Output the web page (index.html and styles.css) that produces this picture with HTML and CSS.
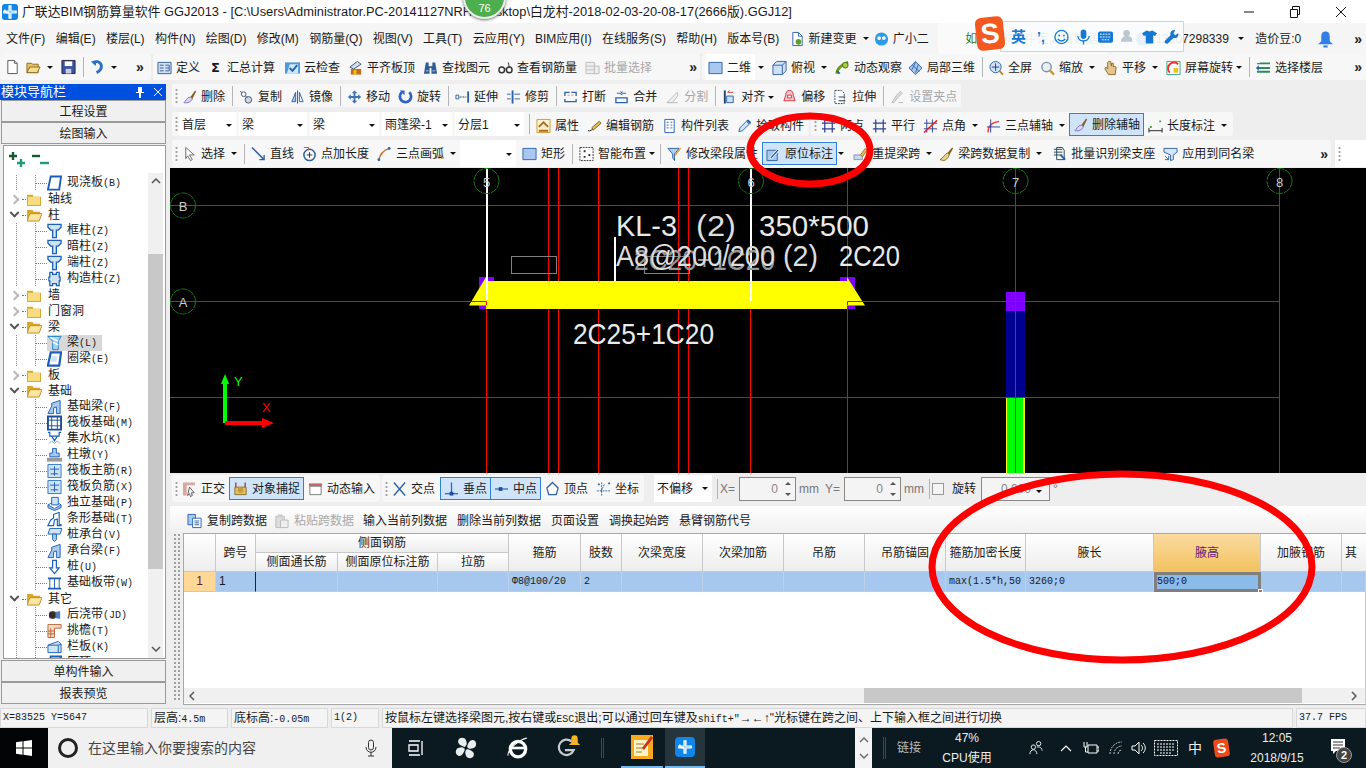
FILE: index.html
```html
<!DOCTYPE html>
<html lang="zh-CN">
<head>
<meta charset="utf-8">
<title>广联达BIM钢筋算量软件 GGJ2013</title>
<link rel="stylesheet" href="styles.css">
</head>
<body>
<svg class="defs" aria-hidden="true">
  <symbol id="doc" viewBox="0 0 16 16"><path d="M3 1h7l3 3v11H3z" fill="#fff" stroke="#555"/><path d="M10 1v3h3" fill="#ddd" stroke="#555"/></symbol>
  <symbol id="open" viewBox="0 0 16 16"><path d="M1 4h5l1 1h6v9H1z" fill="#e8c267" stroke="#8a6a20"/><path d="M1 14l3-6h11l-3 6z" fill="#f6dc92" stroke="#8a6a20"/></symbol>
  <symbol id="save" viewBox="0 0 16 16"><path d="M1 1h14v14H1z" fill="#3a55a8" stroke="#223"/><path d="M4 2h8v5H4z" fill="#fff"/><path d="M5 10h6v5H5z" fill="#ccd"/></symbol>
  <symbol id="undo" viewBox="0 0 16 16"><path d="M4 3c5-2 9 1 8 6-1 3-3 4-5 5" fill="none" stroke="#2c6fc4" stroke-width="3"/><path d="M1 2l6-1-1 6z" fill="#2c6fc4"/></symbol>
  <symbol id="table" viewBox="0 0 16 16"><path d="M1 2h14v12H1z" fill="#cfe0f4" stroke="#335f96"/><path d="M3 5h4M3 8h4M3 11h4M9 5h4v6H9M9 8h4" fill="none" stroke="#335f96"/></symbol>
  <symbol id="cloud" viewBox="0 0 16 16"><path d="M0 2h16v12H0z" fill="#4f9bd8"/><path d="M2 14L5 4h9v10z" fill="#cfe6f8"/><path d="M5 8l3 3 5-6" fill="none" stroke="#1767ad" stroke-width="2"/></symbol>
  <symbol id="plate" viewBox="0 0 16 16"><path d="M2 7l8-6 4 3-8 5z" fill="#cfe0f4" stroke="#456"/><path d="M3 9h11v6H3z" fill="#c66a1c"/><path d="M6 10h3v5H6z" fill="#f1c21d"/></symbol>
  <symbol id="bino" viewBox="0 0 16 16"><path d="M3 2h3v4h4V2h3l2 12H9V8H7v6H1z" fill="#2d5c99"/><path d="M3 11h3M10 11h3" stroke="#bcd" /></symbol>
  <symbol id="glass" viewBox="0 0 16 16"><circle cx="4" cy="10" r="3" fill="none" stroke="#333" stroke-width="1.5"/><circle cx="12" cy="10" r="3" fill="none" stroke="#333" stroke-width="1.5"/><path d="M7 9h2M12 7l-1-5" stroke="#333"/></symbol>
  <symbol id="batch" viewBox="0 0 16 16"><path d="M1 2h9v12H1zM10 6h5v8h-5M1 6h9M1 10h9" fill="#eee" stroke="#bbb"/></symbol>
  <symbol id="sq" viewBox="0 0 16 16"><path d="M1 2h14v12H1z" fill="#a9c8f0" stroke="#2f63a8"/></symbol>
  <symbol id="box3d" viewBox="0 0 16 16"><path d="M1 5l4-4h10v10l-4 4H1z" fill="#cfe0f4" stroke="#2f63a8"/><path d="M1 5h10v10M11 5l4-4" fill="none" stroke="#2f63a8"/></symbol>
  <symbol id="orbit" viewBox="0 0 16 16"><path d="M2 14c0-5 5-10 12-12" fill="none" stroke="#6a9a1c" stroke-width="3"/><circle cx="11" cy="5" r="3" fill="#a6cf3c" stroke="#48700c"/><path d="M2 11l3 3" stroke="#1c5fb8" stroke-width="2"/></symbol>
  <symbol id="local3d" viewBox="0 0 16 16"><path d="M1 8l7-7 7 7-7 7z" fill="#a9c8f0" stroke="#2f63a8"/><path d="M5 5l7 7M8 2l-4 8M11 4l-3 9" fill="none" stroke="#2f63a8"/></symbol>
  <symbol id="zoomall" viewBox="0 0 16 16"><circle cx="7" cy="7" r="6" fill="#cfe0f4" stroke="#2f63a8"/><path d="M7 3v8M3 7h8" stroke="#1c3f78"/><path d="M11 11l4 4" stroke="#b48a2c" stroke-width="2"/></symbol>
  <symbol id="zoom" viewBox="0 0 16 16"><circle cx="7" cy="7" r="5" fill="#e6eef8" stroke="#7f8fa8" stroke-width="1.5"/><path d="M10 10l5 5" stroke="#c79a36" stroke-width="2.5"/></symbol>
  <symbol id="hand" viewBox="0 0 16 16"><path d="M5 2v7L3 7 2 9l4 6h7l1-8-2-1-1 1V3L9 3v3L8 1 6 1z" fill="#e5c58a" stroke="#8a6a30"/></symbol>
  <symbol id="rotsc" viewBox="0 0 16 16"><path d="M1 1h14v14H1z" fill="#fff" stroke="#3a8"/><path d="M4 13a6 6 0 0 1 9-9" fill="none" stroke="#e33" stroke-width="2"/><path d="M8 8h5v5H8z" fill="#f1c21d"/></symbol>
  <symbol id="layers" viewBox="0 0 16 16"><path d="M1 3l5-1h9v2H1zM1 7h14v2H1zM1 11h14v2H1z" fill="#2e8a5a"/><path d="M0 8l3-3v6z" fill="#1c5fb8"/></symbol>
  <symbol id="brush" viewBox="0 0 16 16"><path d="M9 8l5-7 1 1-4 8z" fill="#8a5a1c"/><path d="M2 14c2-1 3-6 7-6l2 2c-1 3-5 5-9 4z" fill="#d8d8f0" stroke="#8a6ac0"/></symbol>
  <symbol id="copy" viewBox="0 0 16 16"><circle cx="5" cy="5" r="2.5" fill="none" stroke="#456"/><circle cx="10" cy="11" r="3.5" fill="#cdd8e4" stroke="#456"/><path d="M1 2l2 1M7 7l2 2" stroke="#1c5fb8"/></symbol>
  <symbol id="mirror" viewBox="0 0 16 16"><path d="M8 1v14" stroke="#456"/><path d="M6 3v10H2z" fill="#a9c8f0" stroke="#2f63a8"/><path d="M10 3v10h4z" fill="none" stroke="#2f63a8"/></symbol>
  <symbol id="move" viewBox="0 0 16 16"><path d="M8 1l3 3H9v3h3V5l3 3-3 3V9H9v3h2l-3 3-3-3h2V9H4v2L1 8l3-3v2h3V4H5z" fill="#3f74b4"/></symbol>
  <symbol id="rot" viewBox="0 0 16 16"><path d="M4 3a6 6 0 1 0 8 0" fill="none" stroke="#2f63c8" stroke-width="3"/><path d="M2 1h5v5z" fill="#2f63c8"/></symbol>
  <symbol id="extend" viewBox="0 0 16 16"><path d="M13 2h2v12h-2z" fill="#2f63a8"/><path d="M1 6h3v4H1z" fill="none" stroke="#2f63a8"/><path d="M5 8h7" stroke="#333" stroke-dasharray="2 1"/></symbol>
  <symbol id="trim" viewBox="0 0 16 16"><path d="M6 1h2v14H6z" fill="#2f63a8"/><path d="M1 5h4M1 10h4M9 5h6M9 10h6" stroke="#2f63a8"/></symbol>
  <symbol id="brk" viewBox="0 0 16 16"><path d="M2 7V3h5M14 7V3H9M2 10v3h12v-3" fill="none" stroke="#2f63a8" stroke-width="1.4"/><path d="M5 6h2M9 6h2" stroke="#e77" /></symbol>
  <symbol id="merge" viewBox="0 0 16 16"><path d="M2 9h12v5H2z" fill="none" stroke="#2f63a8" stroke-width="1.4"/><path d="M3 4h4M9 4h4M7 2l2 2-2 2M9 2L7 4l2 2" fill="none" stroke="#2f63a8"/></symbol>
  <symbol id="split" viewBox="0 0 16 16"><path d="M2 14L13 3l1 3-6 8z" fill="#eee" stroke="#bbb"/><path d="M2 14h12" stroke="#bbb"/></symbol>
  <symbol id="align" viewBox="0 0 16 16"><path d="M3 1v14" stroke="#1c3f78" stroke-width="2"/><path d="M5 7h7v7H5z" fill="#cfe0f4" stroke="#2f63a8"/><path d="M6 3h6M6 3l2-2" stroke="#d33" fill="none"/></symbol>
  <symbol id="offset" viewBox="0 0 16 16"><path d="M8 1c3 0 4 2 4 5l2 6H2l2-6c0-3 1-5 4-5z" fill="#f3c6c6" stroke="#c34"/><path d="M6 9h4V6H6z" fill="#fff" stroke="#c34"/></symbol>
  <symbol id="stretch" viewBox="0 0 16 16"><path d="M2 1h7l3 3v11H2z" fill="#fff" stroke="#345" stroke-dasharray="2 1"/><path d="M6 8h7M6 12h7" stroke="#234"/></symbol>
  <symbol id="setgrip" viewBox="0 0 16 16"><path d="M2 14l5-8 4-4 2 2-4 4-5 6z" fill="#ddd" stroke="#bbb"/><path d="M9 14h5" stroke="#bbb"/></symbol>
  <symbol id="attr" viewBox="0 0 16 16"><path d="M1 1h14v14H1z" fill="#fdf2d0" stroke="#d09a30"/><path d="M3 9l5-5 5 5M3 13h10" fill="none" stroke="#b06a1c" stroke-width="2"/></symbol>
  <symbol id="edit" viewBox="0 0 16 16"><path d="M1 13c3 1 4-2 6-1" fill="none" stroke="#222"/><path d="M5 10l8-7 2 2-8 7z" fill="#e6c25a" stroke="#7a5a10"/></symbol>
  <symbol id="list" viewBox="0 0 16 16"><path d="M3 1h10v14H3z" fill="#fff" stroke="#2f63a8"/><path d="M5 4h2M9 4h2M5 7h2M9 7h2M5 10h2M9 10h2" stroke="#2f63a8"/></symbol>
  <symbol id="pick" viewBox="0 0 16 16"><path d="M2 14l1-4 7-7 3 3-7 7z" fill="#cfe6f8" stroke="#2f63a8"/><path d="M10 2l2-1 3 3-1 2z" fill="#1c5fb8"/></symbol>
  <symbol id="hash" viewBox="0 0 16 16"><path d="M4 1v14M12 1v14M1 5h14M1 11h14" stroke="#2f3f9a" stroke-width="1.3"/></symbol>
  <symbol id="angle" viewBox="0 0 16 16"><path d="M4 1v14M10 1v14M1 5h14M1 11h14" stroke="#2f3f9a"/><path d="M1 15L15 2" stroke="#e22" stroke-width="1.5"/></symbol>
  <symbol id="tpt" viewBox="0 0 16 16"><path d="M2 15C2 8 6 4 14 3" fill="none" stroke="#e44" stroke-width="1.4"/><path d="M5 1v14M1 9h14" stroke="#2f3f9a"/></symbol>
  <symbol id="lenm" viewBox="0 0 16 16"><path d="M1 10v5M15 10v5M1 13h14" stroke="#222"/><path d="M2 8h2v2H2zM12 2h2v2h-2z" fill="#3fa83f"/></symbol>
  <symbol id="arrow" viewBox="0 0 16 16"><path d="M4 1l9 8H8l3 5-2 1-3-5-2 3z" fill="#fff" stroke="#666"/></symbol>
  <symbol id="lineq" viewBox="0 0 16 16"><path d="M1 1l13 13" stroke="#2f5f9f" stroke-width="1.6"/><path d="M14 9v5H9" fill="none" stroke="#2f5f9f" stroke-width="1.4"/></symbol>
  <symbol id="ptlen" viewBox="0 0 16 16"><circle cx="8" cy="9" r="6" fill="none" stroke="#2f5f9f" stroke-width="1.6"/><path d="M8 6v6M5 9h6" stroke="#333"/><path d="M2 1h5v3" fill="none" stroke="#c44"/></symbol>
  <symbol id="arc" viewBox="0 0 16 16"><path d="M2 15C3 8 7 4 13 2" fill="none" stroke="#c8702c" stroke-width="1.6"/><circle cx="2" cy="14" r="1.5" fill="#2f63a8"/><circle cx="13" cy="2" r="1.5" fill="#2f63a8"/></symbol>
  <symbol id="smart" viewBox="0 0 16 16"><path d="M1 1h14v14H1z" fill="#fff" stroke="#333" stroke-dasharray="2 1"/><path d="M5 4h2v2H5zM10 8h2v2h-2zM5 10h2v2H5z" fill="#333"/></symbol>
  <symbol id="funnel" viewBox="0 0 16 16"><path d="M1 2h12L8 8v7L6 12V8z" fill="#a9d0f0" stroke="#2f63a8"/><path d="M8 9l6-8 1 1-6 8z" fill="#e6a030"/></symbol>
  <symbol id="mark" viewBox="0 0 16 16"><path d="M1 4h11v11H1z" fill="#a9c8f0" stroke="#2f63a8"/><path d="M4 12l8-9 2 1-8 9z" fill="#1c5fb8" stroke="#fff"/></symbol>
  <symbol id="repick" viewBox="0 0 16 16"><path d="M1 14V9h9v5z" fill="#c9d8ec" stroke="#7a9ac4"/><path d="M8 9l5-7 2 2-5 7z" fill="#e0c060" stroke="#97801c"/></symbol>
  <symbol id="broom" viewBox="0 0 16 16"><path d="M9 7l5-6 1 1-4 7z" fill="#8a5a1c"/><path d="M1 14c3-1 5-6 8-7l2 2c-1 3-4 6-6 6z" fill="#e8d48a" stroke="#8a7020"/></symbol>
  <symbol id="batchid" viewBox="0 0 16 16"><path d="M2 3h9M2 6h9M2 9h9" stroke="#245"/><path d="M5 1h6l2 3v10H5z" fill="none" stroke="#245"/><path d="M9 9l5 5" stroke="#1c5fb8" stroke-width="2"/></symbol>
  <symbol id="apply" viewBox="0 0 16 16"><path d="M1 2h14v4l-4 3v5l-3 1V9L1 6z" fill="#d5e6f7" stroke="#2f63a8"/><path d="M2 10l4 4M6 10v4H2" fill="none" stroke="#2f63a8"/></symbol>
  <symbol id="bug" viewBox="0 0 16 16"><path d="M3 1h6l4 4v10H3z" fill="#fff" stroke="#2f63a8"/><path d="M9 1v4h4" fill="none" stroke="#2f63a8"/><circle cx="9" cy="11" r="3" fill="#5aa02c"/></symbol>
  <symbol id="ortho" viewBox="0 0 16 16"><path d="M1 1h13v3H5v11H1z" fill="#d9a7a0"/><path d="M8 6l5 6h-3l1 3-2 1-1-3-2 2z" fill="#fff" stroke="#555"/></symbol>
  <symbol id="snap" viewBox="0 0 16 16"><path d="M3 1v6M13 1v6" stroke="#b44" stroke-width="1.6"/><path d="M2 6h12v8H2z" fill="#e6c25a" stroke="#8a6a30"/><circle cx="8" cy="9" r="3" fill="#c49a3a"/></symbol>
  <symbol id="dyn" viewBox="0 0 16 16"><path d="M1 2h14v3H1z" fill="#c46a6a"/><path d="M2 5h12v9H2z" fill="#fff" stroke="#777"/></symbol>
  <symbol id="cross" viewBox="0 0 16 16"><path d="M2 1l12 14M14 1L2 15" stroke="#2f63a8" stroke-width="1.5"/></symbol>
  <symbol id="perp" viewBox="0 0 16 16"><path d="M8 1v12" stroke="#2f63a8" stroke-width="1.3"/><path d="M1 13h14" stroke="#2f63a8" stroke-width="1.3"/><path d="M6 11h4v4H6z" fill="#1c4fa0"/></symbol>
  <symbol id="midp" viewBox="0 0 16 16"><path d="M1 8h14" stroke="#2f63a8" stroke-width="1.3"/><path d="M5 6h4v4H5z" fill="#1c4fa0"/></symbol>
  <symbol id="vertex" viewBox="0 0 16 16"><path d="M8 1l6 6-2 7H4L2 7z" fill="#fff" stroke="#2f63a8" stroke-width="1.4"/></symbol>
  <symbol id="coord" viewBox="0 0 16 16"><path d="M6 1v14M1 10h14M9 3l-4 8" stroke="#2f63a8" stroke-dasharray="2 1"/><path d="M2 2h2v2H2zM13 1h2v2h-2z" fill="#2f63a8"/></symbol>
  <symbol id="copydata" viewBox="0 0 16 16"><path d="M1 1h8v11H1z" fill="#a9c8f0" stroke="#2f63a8"/><path d="M6 5h9v10H6z" fill="#fff" stroke="#2f63a8"/><path d="M8 8h5M8 10h5M8 12h5" stroke="#2f63a8"/></symbol>
  <symbol id="paste" viewBox="0 0 16 16"><path d="M2 3h9v12H2z" fill="#ddd" stroke="#bbb"/><path d="M4 1h5v3H4z" fill="#ccc"/><path d="M7 7h8v8H7z" fill="#eee" stroke="#bbb"/></symbol>
  <symbol id="plus2" viewBox="0 0 20 16"><path d="M1 5h8M5 1v8" stroke="#145a32" stroke-width="2.4"/><path d="M9 12h8M13 8v8" stroke="#1f9a7a" stroke-width="2.4"/></symbol>
  <symbol id="minus2" viewBox="0 0 20 16"><path d="M1 5h8" stroke="#145a32" stroke-width="2.4"/><path d="M9 12h9" stroke="#1f9a7a" stroke-width="2.4"/></symbol>
  <symbol id="fc" viewBox="0 0 16 14"><path d="M0 2h6l1 2h8v10H0z" fill="#d9a52c"/><path d="M1 4h13v9H1z" fill="#f7dc82"/></symbol>
  <symbol id="fo" viewBox="0 0 16 14"><path d="M0 1h6l1 2h7v2H3L0 13z" fill="#d9a52c"/><path d="M3 5h13l-3 8H0z" fill="#fbe6a0" stroke="#b98a20"/></symbol>
  <symbol id="tc" viewBox="0 0 16 16"><path d="M1 1h14v3l-3 3H10v8H6V7H4L1 4z" fill="#cfe3f7" stroke="#1c5fb8" stroke-width="1.4"/></symbol>
  <symbol id="slab" viewBox="0 0 16 16"><path d="M4 1h11l-2 14H1z" fill="#fff" stroke="#1c5fb8" stroke-width="2"/></symbol>
  <symbol id="ring" viewBox="0 0 16 16"><path d="M4 1h11l-2 14H1z" fill="#fff" stroke="#1c5fb8" stroke-width="2.4"/><path d="M5 5h6l-1 6H4z" fill="#cfe3f7"/></symbol>
  <symbol id="gzz" viewBox="0 0 16 16"><path d="M3 1h3v2h4V1h3v5h1v4h-1v5h-3v-2H6v2H3v-5H2V6h1z" fill="#cfe3f7" stroke="#1c5fb8" stroke-width="1.3"/></symbol>
  <symbol id="ltk" viewBox="0 0 16 16"><path d="M1 1h14l-3 5v9H6V6z" fill="#a6d4f5" stroke="#1c7fc8"/><path d="M3 2l9 4M6 7l6 3" stroke="#fff" stroke-width="1.4"/></symbol>
  <symbol id="fbeam" viewBox="0 0 16 16"><path d="M1 15l4-8V4l9-3v14h-4V8L7 9v6z" fill="#a9c8f0" stroke="#1c5fb8"/></symbol>
  <symbol id="fgrid" viewBox="0 0 16 16"><path d="M1 1h14v14H1z" fill="#fff" stroke="#1c4f98" stroke-width="2"/><path d="M5 1v14M11 1v14M1 5h14M1 11h14" stroke="#1c4f98"/></symbol>
  <symbol id="pit" viewBox="0 0 16 16"><path d="M1 1h2v4h10V1h2M5 5l3 5 3-5" fill="none" stroke="#1c5fb8" stroke-width="1.3"/><path d="M2 13l3-3 3 3 3-3 3 3" fill="none" stroke="#88a8d8"/></symbol>
  <symbol id="pier" viewBox="0 0 16 16"><path d="M6 1h4v5h3v4H3V6h3z" fill="#a9c8f0" stroke="#1c5fb8"/><path d="M0 11h16v4H0z" fill="#999"/></symbol>
  <symbol id="fmain" viewBox="0 0 16 16"><path d="M1 1h14v14H1z" fill="#cfe3f7" stroke="#2f73c4"/><path d="M8 3v10M3 6h10M4 11h8" stroke="#1c5fb8"/></symbol>
  <symbol id="indep" viewBox="0 0 16 16"><path d="M1 10l7 4 7-4v3l-7 3-7-3z" fill="#a9c8f0" stroke="#1c5fb8"/><path d="M5 2h7v8H5z" fill="#cfe3f7" stroke="#1c5fb8"/><path d="M1 10l4-2M15 10l-3-2" stroke="#1c5fb8"/></symbol>
  <symbol id="strip" viewBox="0 0 16 16"><path d="M1 15l3-6 3-2V3l6-2v13h2v1h-4V8l-3 1-1 6z" fill="#fff" stroke="#1c5fb8" stroke-width="1.2"/></symbol>
  <symbol id="cap" viewBox="0 0 16 16"><path d="M3 1h13l-2 6H1z" fill="#cfe3f7" stroke="#1c5fb8"/><path d="M6 7h4v6L8 15l-2-2z" fill="#a9c8f0" stroke="#1c5fb8"/></symbol>
  <symbol id="pile" viewBox="0 0 16 16"><path d="M6 1h4v8h3l-5 6-5-6h3z" fill="#fff" stroke="#1c5fb8" stroke-width="1.3"/></symbol>
  <symbol id="band" viewBox="0 0 16 16"><path d="M1 3h14M1 14h14" stroke="#1c5fb8" stroke-width="2"/><path d="M3 3v11M8 3v11M13 3v11" stroke="#1c5fb8"/></symbol>
  <symbol id="post" viewBox="0 0 16 16"><path d="M2 4h12v8H2z" fill="#b8c8e0"/><circle cx="6" cy="8" r="4" fill="#3a2a20"/><path d="M9 5l5-1v8l-5-1z" fill="#4f7fc8"/></symbol>
  <symbol id="eave" viewBox="0 0 16 16"><path d="M1 1h14v4H8v10H1z" fill="#f6d8c0" stroke="#b8683c"/><path d="M1 8h7M1 11h7M4 5v10" stroke="#b8683c"/></symbol>
  <symbol id="rail" viewBox="0 0 16 16"><path d="M1 6l11-4 3 3v9H1z" fill="#cfe3f7" stroke="#1c5fb8"/><path d="M1 6h11v8M12 6l3-1" fill="none" stroke="#1c5fb8"/></symbol>
  <symbol id="bell" viewBox="0 0 16 16"><path d="M8 1c3 0 4 2 4 5v4l3 3H1l3-3V6c0-3 1-5 4-5z" fill="#2f7fe6"/><path d="M6 14h4v2H6z" fill="#2f7fe6"/></symbol>
  <symbol id="gld" viewBox="0 0 16 16"><path d="M7 1h2v6h6v2H9v6H7V9H1V7h6z" fill="none" stroke="#fff" stroke-width="1.6"/><path d="M2 5c0 3 3 4 5 4" fill="none" stroke="#fff" stroke-width="1.6"/></symbol>
</svg>

<div class="app">
  <header class="title">
    <span class="app-ic"><svg class="i14"><use href="#gld"/></svg></span>
    <span class="title-t">广联达BIM钢筋算量软件 GGJ2013 - [C:\Users\Administrator.PC-20141127NRHI\Desktop\白龙村-2018-02-03-20-08-17(2666版).GGJ12]</span>
    <span class="win">
      <svg class="wb" viewBox="0 0 12 12"><path d="M1 6h10" stroke="#111"/></svg>
      <svg class="wb" viewBox="0 0 12 12"><path d="M1.5 3.5h7v8h-7zM3.5 3V.5h7v8H9" fill="none" stroke="#111"/></svg>
      <svg class="wb" viewBox="0 0 12 12"><path d="M1 1l10 10M11 1L1 11" stroke="#111"/></svg>
    </span>
  </header>

  <nav class="menu">
    <span>文件(F)</span><span>编辑(E)</span><span>楼层(L)</span><span>构件(N)</span><span>绘图(D)</span><span>修改(M)</span><span>钢筋量(Q)</span><span>视图(V)</span><span>工具(T)</span><span>云应用(Y)</span><span>BIM应用(I)</span><span>在线服务(S)</span><span>帮助(H)</span><span>版本号(B)</span>
    <span class="item mi"><svg class="i"><use href="#bug"/></svg>新建变更<i class="dd"></i></span>
    <span class="item mi2"><svg class="i" viewBox="0 0 16 16"><circle cx="8" cy="8" r="7" fill="#2c9be6"/><circle cx="5.5" cy="7" r="2" fill="#fff"/><circle cx="10.5" cy="7" r="2" fill="#fff"/></svg>广小二</span>
    <span class="notice">如何在软件中定义自数据</span>
    <span class="acct"><svg class="i" viewBox="0 0 16 16"><circle cx="8" cy="8" r="7" fill="#2c7fc8"/></svg>13907298339<i class="dd"></i></span>
    <span class="bean">造价豆:0</span>
    <svg class="i bellic"><use href="#bell"/></svg>
    <span class="more">»</span>
  </nav>

  <div class="tb1">
    <div class="seg s1a">
      <svg class="i"><use href="#doc"/></svg>
      <svg class="i g5"><use href="#open"/></svg><i class="dd d3"></i>
      <svg class="i g6"><use href="#save"/></svg><i class="sep"></i>
      <svg class="i"><use href="#undo"/></svg><i class="dd d3"></i>
      <span class="more m1">»</span>
    </div>
    <div class="seg s1b">
      <span class="item"><svg class="i"><use href="#table"/></svg>定义</span>
      <span class="item"><span class="sigma">Σ</span>汇总计算</span>
      <span class="item x2"><svg class="i"><use href="#cloud"/></svg>云检查</span>
      <span class="item"><svg class="i"><use href="#plate"/></svg>平齐板顶</span>
      <span class="item"><svg class="i"><use href="#bino"/></svg>查找图元</span>
      <span class="item"><svg class="i"><use href="#glass"/></svg>查看钢筋量</span>
      <span class="item off"><svg class="i"><use href="#batch"/></svg>批量选择</span>
      <span class="more m2">»</span>
    </div>
    <div class="seg s1c">
      <span class="view"><svg class="i"><use href="#sq"/></svg>二维</span><i class="dd d8"></i>
      <span class="item"><svg class="i"><use href="#box3d"/></svg>俯视<i class="dd"></i></span>
      <span class="item t6"><svg class="i"><use href="#orbit"/></svg>动态观察</span>
      <span class="item"><svg class="i"><use href="#local3d"/></svg>局部三维</span><i class="sep"></i>
      <span class="item"><svg class="i"><use href="#zoomall"/></svg>全屏</span>
      <span class="item"><svg class="i"><use href="#zoom"/></svg>缩放<i class="dd"></i></span>
      <span class="item"><svg class="i"><use href="#hand"/></svg>平移<i class="dd"></i></span>
      <span class="item"><svg class="i"><use href="#rotsc"/></svg>屏幕旋转<i class="dd d1"></i></span><i class="sep"></i>
      <span class="item"><svg class="i"><use href="#layers"/></svg>选择楼层</span>
      <span class="more m3">»</span>
    </div>
  </div>

  <div class="main">
    <aside class="nav">
      <div class="nav-h"><span>模块导航栏</span><span class="nav-x"><svg class="pin" viewBox="0 0 10 12"><path d="M3 1h4v5h2v1H6v5H4V7H1V6h2z" fill="#fff"/></svg><svg class="pin" viewBox="0 0 10 12"><path d="M1 2l8 8M9 2l-8 8" stroke="#fff"/></svg></span></div>
      <div class="nav-b">工程设置</div>
      <div class="nav-b">绘图输入</div>
      <div class="treebox">
        <div class="tree-tools"><svg class="ic20"><use href="#plus2"/></svg><svg class="ic20"><use href="#minus2"/></svg></div>
        <div class="tree-wrap">
          <div class="tree">
            <div class="r l2 gv"><i class="cn"></i><svg class="i"><use href="#slab"/></svg><span class="t">现浇板<span class="m">(B)</span></span></div>
            <div class="r l1"><i class="chev c"></i><i class="cn1"></i><svg class="fd"><use href="#fc"/></svg><span class="t">轴线</span></div>
            <div class="r l1"><i class="chev o"></i><i class="cn1"></i><svg class="fd"><use href="#fo"/></svg><span class="t">柱</span></div>
            <div class="r l2 gv"><i class="cn"></i><svg class="i"><use href="#tc"/></svg><span class="t">框柱<span class="m">(Z)</span></span></div>
            <div class="r l2 gv"><i class="cn"></i><svg class="i"><use href="#tc"/></svg><span class="t">暗柱<span class="m">(Z)</span></span></div>
            <div class="r l2 gv"><i class="cn"></i><svg class="i"><use href="#tc"/></svg><span class="t">端柱<span class="m">(Z)</span></span></div>
            <div class="r l2 gv"><i class="cn"></i><svg class="i"><use href="#gzz"/></svg><span class="t">构造柱<span class="m">(Z)</span></span></div>
            <div class="r l1"><i class="chev c"></i><i class="cn1"></i><svg class="fd"><use href="#fc"/></svg><span class="t">墙</span></div>
            <div class="r l1"><i class="chev c"></i><i class="cn1"></i><svg class="fd"><use href="#fc"/></svg><span class="t">门窗洞</span></div>
            <div class="r l1"><i class="chev o"></i><i class="cn1"></i><svg class="fd"><use href="#fo"/></svg><span class="t">梁</span></div>
            <div class="r l2 gv"><i class="cn"></i><span class="sel"><svg class="i"><use href="#ltk"/></svg><span class="t">梁<span class="m">(L)</span></span></span></div>
            <div class="r l2 gv"><i class="cn"></i><svg class="i"><use href="#ring"/></svg><span class="t">圈梁<span class="m">(E)</span></span></div>
            <div class="r l1"><i class="chev c"></i><i class="cn1"></i><svg class="fd"><use href="#fc"/></svg><span class="t">板</span></div>
            <div class="r l1"><i class="chev o"></i><i class="cn1"></i><svg class="fd"><use href="#fo"/></svg><span class="t">基础</span></div>
            <div class="r l2 gv"><i class="cn"></i><svg class="i"><use href="#fbeam"/></svg><span class="t">基础梁<span class="m">(F)</span></span></div>
            <div class="r l2 gv"><i class="cn"></i><svg class="i"><use href="#fgrid"/></svg><span class="t">筏板基础<span class="m">(M)</span></span></div>
            <div class="r l2 gv"><i class="cn"></i><svg class="i"><use href="#pit"/></svg><span class="t">集水坑<span class="m">(K)</span></span></div>
            <div class="r l2 gv"><i class="cn"></i><svg class="i"><use href="#pier"/></svg><span class="t">柱墩<span class="m">(Y)</span></span></div>
            <div class="r l2 gv"><i class="cn"></i><svg class="i"><use href="#fmain"/></svg><span class="t">筏板主筋<span class="m">(R)</span></span></div>
            <div class="r l2 gv"><i class="cn"></i><svg class="i"><use href="#fmain"/></svg><span class="t">筏板负筋<span class="m">(X)</span></span></div>
            <div class="r l2 gv"><i class="cn"></i><svg class="i"><use href="#indep"/></svg><span class="t">独立基础<span class="m">(P)</span></span></div>
            <div class="r l2 gv"><i class="cn"></i><svg class="i"><use href="#strip"/></svg><span class="t">条形基础<span class="m">(T)</span></span></div>
            <div class="r l2 gv"><i class="cn"></i><svg class="i"><use href="#cap"/></svg><span class="t">桩承台<span class="m">(V)</span></span></div>
            <div class="r l2 gv"><i class="cn"></i><svg class="i"><use href="#fbeam"/></svg><span class="t">承台梁<span class="m">(F)</span></span></div>
            <div class="r l2 gv"><i class="cn"></i><svg class="i"><use href="#pile"/></svg><span class="t">桩<span class="m">(U)</span></span></div>
            <div class="r l2 gv"><i class="cn"></i><svg class="i"><use href="#band"/></svg><span class="t">基础板带<span class="m">(W)</span></span></div>
            <div class="r l1"><i class="chev o"></i><i class="cn1"></i><svg class="fd"><use href="#fo"/></svg><span class="t">其它</span></div>
            <div class="r l2 gv"><i class="cn"></i><svg class="i"><use href="#post"/></svg><span class="t">后浇带<span class="m">(JD)</span></span></div>
            <div class="r l2 gv"><i class="cn"></i><svg class="i"><use href="#eave"/></svg><span class="t">挑檐<span class="m">(T)</span></span></div>
            <div class="r l2 gv"><i class="cn"></i><svg class="i"><use href="#rail"/></svg><span class="t">栏板<span class="m">(K)</span></span></div>
            <div class="r l2 gv"><i class="cn"></i><svg class="i"><use href="#slab"/></svg><span class="t">压顶<span class="m">(Y)</span></span></div>
          </div>
          <div class="vsb">
            <svg class="sbarrow" viewBox="0 0 10 6"><path d="M1 5l4-4 4 4" fill="none" stroke="#555" stroke-width="1.5"/></svg>
            <div class="vsb-thumb"></div>
            <svg class="sbarrow end" viewBox="0 0 10 6"><path d="M1 1l4 4 4-4" fill="none" stroke="#555" stroke-width="1.5"/></svg>
          </div>
        </div>
      </div>
      <div class="nav-b">单构件输入</div>
      <div class="nav-b">报表预览</div>
    </aside>

    <section class="work">
      <div class="row r2">
        <div class="seg s2">
          <i class="grip"></i>
          <span class="item"><svg class="i"><use href="#brush"/></svg>删除</span><i class="sep"></i>
          <span class="item"><svg class="i"><use href="#copy"/></svg>复制</span>
          <span class="item"><svg class="i"><use href="#mirror"/></svg>镜像</span><i class="sep"></i>
          <span class="item"><svg class="i"><use href="#move"/></svg>移动</span>
          <span class="item"><svg class="i"><use href="#rot"/></svg>旋转</span><i class="sep"></i>
          <span class="item"><svg class="i"><use href="#extend"/></svg>延伸</span>
          <span class="item"><svg class="i"><use href="#trim"/></svg>修剪</span><i class="sep"></i>
          <span class="item"><svg class="i"><use href="#brk"/></svg>打断</span>
          <span class="item"><svg class="i"><use href="#merge"/></svg>合并</span>
          <span class="item off"><svg class="i"><use href="#split"/></svg>分割</span><i class="sep"></i>
          <span class="item"><svg class="i"><use href="#align"/></svg>对齐<i class="dd d1"></i></span>
          <span class="item"><svg class="i"><use href="#offset"/></svg>偏移</span>
          <span class="item"><svg class="i"><use href="#stretch"/></svg>拉伸</span><i class="sep"></i>
          <span class="item off"><svg class="i"><use href="#setgrip"/></svg>设置夹点</span>
        </div>
      </div>

      <div class="row r3">
        <div class="seg s3a">
          <i class="grip g-s"></i>
          <span class="combo c57">首层<i class="dd"></i></span>
          <span class="combo c68">梁<i class="dd"></i></span>
          <span class="combo c69">梁<i class="dd"></i></span>
          <span class="combo c70">雨篷梁-1<i class="dd"></i></span>
          <span class="combo c69">分层1<i class="dd"></i></span><i class="sep"></i>
          <span class="item"><svg class="i"><use href="#attr"/></svg>属性</span>
          <span class="item"><svg class="i"><use href="#edit"/></svg>编辑钢筋</span>
          <span class="item"><svg class="i"><use href="#list"/></svg>构件列表</span>
          <span class="item"><svg class="i"><use href="#pick"/></svg>拾取构件</span>
        </div>
        <div class="seg s3b">
          <i class="grip"></i>
          <span class="item"><svg class="i"><use href="#hash"/></svg>两点</span>
          <span class="item"><svg class="i"><use href="#hash"/></svg>平行</span>
          <span class="item"><svg class="i"><use href="#angle"/></svg>点角<i class="dd"></i></span>
          <span class="item"><svg class="i"><use href="#tpt"/></svg>三点辅轴<i class="dd"></i></span>
          <span class="item btn ml-4"><svg class="i"><use href="#brush"/></svg>删除辅轴</span>
          <span class="item"><svg class="i"><use href="#lenm"/></svg>长度标注<i class="dd"></i></span>
        </div>
      </div>

      <div class="row r4">
        <div class="seg s4">
          <i class="grip"></i>
          <span class="item"><svg class="i"><use href="#arrow"/></svg>选择<i class="dd"></i></span><i class="sep"></i>
          <span class="item"><svg class="i"><use href="#lineq"/></svg>直线</span>
          <span class="item"><svg class="i"><use href="#ptlen"/></svg>点加长度</span>
          <span class="item"><svg class="i"><use href="#arc"/></svg>三点画弧<i class="dd"></i></span>
          <span class="combo blank"><i class="dd"></i></span>
          <span class="item"><svg class="i"><use href="#sq"/></svg>矩形</span><i class="sep"></i>
          <span class="item t6"><svg class="i"><use href="#smart"/></svg>智能布置<i class="dd d1"></i></span><i class="sep"></i>
          <span class="item t4"><svg class="i"><use href="#funnel"/></svg>修改梁段属性</span>
          <span class="item btn"><svg class="i"><use href="#mark"/></svg>原位标注</span><i class="dd d4"></i>
          <span class="item t7"><svg class="i"><use href="#repick"/></svg>重提梁跨<i class="dd"></i></span>
          <span class="item t10"><svg class="i"><use href="#broom"/></svg>梁跨数据复制<i class="dd"></i></span>
          <span class="item"><svg class="i"><use href="#batchid"/></svg>批量识别梁支座</span>
          <span class="item"><svg class="i"><use href="#apply"/></svg>应用到同名梁</span>
          <span class="more m4">»</span>
        </div>
        <div class="s4end"><i class="grip"></i></div>
      </div>

      <svg class="canvas" viewBox="170 168 1196 305" role="img" aria-label="绘图区">
        <rect x="170" y="168" width="1196" height="305" fill="#000"/>
        <g stroke="#f00" stroke-width="1" fill="none">
          <path d="M170 205.5H1279M170 301.5H1279M170 397.5H1279"/>
          <path d="M486.5 301V473M548.5 168V473M558.5 168V473M598.5 168V473M678.5 168V473M688.5 168V473M750.5 300V473M847.5 168V473"/>
        </g>
        <rect x="1006" y="292" width="19" height="19" fill="#7f00ff"/>
        <rect x="1006" y="311" width="19" height="86" fill="#000090"/>
        <rect x="1006" y="398" width="19" height="75" fill="#ff0"/>
        <rect x="1007" y="398" width="16" height="75" fill="#0f0"/>
        <path d="M170 397.5H1279M170 301.5H1279M1015.5 168V473M1279.5 168V473" stroke="#f00" fill="none"/>
        <g fill="#7f00ff"><rect x="479" y="277" width="15" height="32"/><rect x="840" y="277" width="15" height="32"/></g>
        <rect x="486" y="281" width="361" height="28" fill="#ff0"/>
        <path d="M486 277L469 305.5H486zM847 277L865 305.5H847z" fill="#ff0"/>
        <path d="M469 301.5H486.5V305M847.5 305V301.5H865" stroke="#f00" fill="none"/>
        <g fill="#fff">
          <rect x="486" y="168" width="2" height="132"/><rect x="750" y="168" width="2" height="133"/><rect x="614" y="237" width="2" height="44"/>
        </g>
        <g fill="none" stroke="#808080"><rect x="511.5" y="256.5" width="45" height="17"/><rect x="644.5" y="256.5" width="45" height="17"/></g>
        <g fill="none" stroke="#0a7a0a">
          <circle cx="183" cy="205.5" r="12.5" stroke-dasharray="7 1"/><circle cx="183" cy="301.5" r="12.5" stroke-dasharray="7 1"/>
          <circle cx="486.5" cy="181" r="12.5" stroke-dasharray="7 1"/><circle cx="751" cy="181" r="12.5" stroke-dasharray="7 1"/>
          <circle cx="1015.5" cy="181" r="12.5" stroke-dasharray="7 1"/><circle cx="1279.5" cy="181" r="12.5" stroke-dasharray="7 1"/>
        </g>
        <g class="axn" text-anchor="middle">
          <text x="183" y="211">B</text><text x="183" y="307">A</text><text x="486.5" y="187">5</text><text x="751" y="187">6</text><text x="1015.5" y="187">7</text><text x="1279.5" y="187">8</text>
        </g>
        <g class="cad">
          <text x="616" y="235.5" textLength="61" lengthAdjust="spacingAndGlyphs">KL-3</text>
          <text x="696" y="235.5" textLength="40" lengthAdjust="spacingAndGlyphs" class="cj">(2)</text>
          <text x="759" y="235.5" textLength="110" lengthAdjust="spacingAndGlyphs">350*500</text>
          <text x="634" y="270" textLength="141" lengthAdjust="spacingAndGlyphs" class="ghost">2C20+1C20</text>
          <text x="616" y="266" textLength="159" lengthAdjust="spacingAndGlyphs" class="dim">A8@200/200</text>
          <text x="783" y="266" textLength="35" lengthAdjust="spacingAndGlyphs" class="cj">(2)</text>
          <text x="839" y="266" textLength="61" lengthAdjust="spacingAndGlyphs">2C20</text>
          <text x="573" y="344" textLength="141" lengthAdjust="spacingAndGlyphs">2C25+1C20</text>
        </g>
        <rect x="223" y="384" width="4" height="39" fill="#0f0"/>
        <path d="M225 374l4 10h-8z" fill="#0f0"/>
        <rect x="225" y="421" width="38" height="4" fill="#f00"/>
        <path d="M262 418l12 5-12 5z" fill="#f00"/>
        <text x="234" y="386" class="axy">Y</text>
        <text x="262" y="412" class="axx">X</text>
      </svg>

      <div class="row snap">
        <div class="seg sn1">
          <i class="grip"></i>
          <span class="item t4"><svg class="i"><use href="#ortho"/></svg>正交</span>
          <span class="item btn b75"><svg class="i"><use href="#snap"/></svg>对象捕捉</span>
          <span class="item"><svg class="i"><use href="#dyn"/></svg>动态输入</span>
        </div>
        <div class="seg sn2">
          <i class="grip"></i>
          <span class="item t5"><svg class="i"><use href="#cross"/></svg>交点</span>
          <span class="item btn nm"><svg class="i"><use href="#perp"/></svg>垂点</span>
          <span class="item btn"><svg class="i"><use href="#midp"/></svg>中点</span>
          <span class="item"><svg class="i"><use href="#vertex"/></svg>顶点</span>
          <span class="item"><svg class="i"><use href="#coord"/></svg>坐标</span>
        </div>
        <div class="seg sn3">
          <span class="combo c58">不偏移<i class="dd"></i></span><i class="sep"></i>
          <span class="lab x">X=</span>
          <span class="spin"><span class="v">0</span><span class="spb"><i class="up"></i><i class="dn"></i></span></span>
          <span class="lab">mm</span>
          <span class="lab x">Y=</span>
          <span class="spin"><span class="v">0</span><span class="spb"><i class="up"></i><i class="dn"></i></span></span>
          <span class="lab e">mm</span><i class="sep"></i>
          <i class="chk"></i>
          <span class="rotl">旋转</span>
          <span class="spin wide"><span class="v">0.000</span><i class="dd"></i></span>
          <span class="lab">°</span>
        </div>
      </div>

      <div class="gridpane">
        <div class="gp-strip"><svg class="gp-x" viewBox="0 0 10 10"><path d="M0 0h10v10H0z" fill="#eee" stroke="#555"/><path d="M1 1l8 8M9 1L1 9" stroke="#a33"/></svg><i class="grip long"></i></div>
        <div class="gp-body">
          <div class="gtb">
            <span class="item"><svg class="i"><use href="#copydata"/></svg>复制跨数据</span>
            <span class="item off"><svg class="i"><use href="#paste"/></svg>粘贴跨数据</span>
            <span class="tx">输入当前列数据</span><span class="tx">删除当前列数据</span><span class="tx">页面设置</span><span class="tx">调换起始跨</span><span class="tx">悬臂钢筋代号</span>
          </div>
          <div class="gtable">
            <div class="grid">
              <div class="h rs"></div>
              <div class="h rs">跨号</div>
              <div class="h cs3">侧面钢筋</div>
              <div class="h rs">箍筋</div><div class="h rs">肢数</div><div class="h rs">次梁宽度</div><div class="h rs">次梁加筋</div><div class="h rs">吊筋</div><div class="h rs">吊筋锚固</div><div class="h rs">箍筋加密长度</div><div class="h rs">腋长</div><div class="h rs act">腋高</div><div class="h rs">加腋钢筋</div><div class="h rs clip">其</div>
              <div class="h">侧面通长筋</div><div class="h">侧面原位标注筋</div><div class="h">拉筋</div>
              <div class="d rowh">1</div><div class="d first">1</div><div class="d"></div><div class="d"></div><div class="d"></div><div class="d mono">Φ8@100/20</div><div class="d mono">2</div><div class="d"></div><div class="d"></div><div class="d"></div><div class="d"></div><div class="d mono">max(1.5*h,50</div><div class="d mono">3260;0</div><div class="d mono cur">500;0<i class="hnd"></i></div><div class="d"></div><div class="d"></div>
            </div>
            <div class="gfill"></div>
            <div class="hsb">
              <svg class="sbarrow h1" viewBox="0 0 6 10"><path d="M5 1L1 5l4 4" fill="none" stroke="#555" stroke-width="1.5"/></svg>
              <div class="hsb-thumb"></div>
              <svg class="sbarrow h2" viewBox="0 0 6 10"><path d="M1 1l4 4-4 4" fill="none" stroke="#555" stroke-width="1.5"/></svg>
            </div>
          </div>
        </div>
      </div>
    </section>
  </div>

  <footer class="status">
    <span class="st s147 m">X=83525 Y=5647</span>
    <span class="st s77">层高:<span class="m">4.5m</span></span>
    <span class="st s97">底标高:<span class="m">-0.05m</span></span>
    <span class="st s48 m">1(2)</span>
    <span class="st grow">按鼠标左键选择梁图元,按右键或<span class="m">ESC</span>退出;可以通过回车键及<span class="m">shift+"</span>→←↑"光标键在跨之间、上下输入框之间进行切换</span>
    <span class="st s70 m">37.7 FPS</span>
  </footer>

  <div class="taskbar">
    <span class="start"><svg class="win10" viewBox="0 0 16 16"><path d="M0 2.2L6.5 1.3V7.5H0zM7.5 1.2L16 0V7.5H7.5zM0 8.5H6.5V14.7L0 13.8zM7.5 8.5H16V16L7.5 14.8z" fill="#fff"/></svg></span>
    <span class="search"><i class="cortana"></i><span class="stxt">在这里输入你要搜索的内容</span><svg class="mic" viewBox="0 0 12 18"><rect x="3.5" y="1" width="5" height="10" rx="2.5" fill="none" stroke="#333"/><path d="M1 8c0 7 10 7 10 0M6 13v4M3 17h6" fill="none" stroke="#333"/></svg></span>
    <svg class="tk tv" viewBox="0 0 16 16"><path d="M1 1h11M1 15h11M1 5h9v6H1zM14 1v14" fill="none" stroke="#fff" stroke-width="1.3"/></svg>
    <svg class="tk fan" viewBox="0 0 20 20"><path d="M9 9C5 8 2 6 3 3s6-3 7 0 1 4-1 6zM11 9c1-4 3-7 6-6s3 6 0 7-4 1-6-1zM11 11c4 1 7 3 6 6s-6 3-7 0-1-4 1-6zM9 11c-1 4-3 7-6 6s-3-6 0-7 4-1 6 1z" fill="#e8eef0"/></svg>
    <svg class="tk ie" viewBox="0 0 20 20"><circle cx="10" cy="11" r="7" fill="none" stroke="#fff" stroke-width="3"/><path d="M4 10h13" stroke="#fff" stroke-width="2.4"/><path d="M1 17C0 11 12 2 18 1" fill="none" stroke="#fff"/></svg>
    <span class="swirl"><svg class="tk" viewBox="0 0 20 20"><path d="M15 4a7 7 0 1 0 2 8H9" fill="none" stroke="#c8ccd0" stroke-width="2"/></svg><svg class="tkb" viewBox="0 0 16 16"><path d="M8 1c3 0 4 2 4 5v4l3 3H1l3-3V6c0-3 1-5 4-5z" fill="#f5b324"/></svg></span>
    <i class="tsep"></i>
    <span class="tapp note"><svg class="ap" viewBox="0 0 24 26"><path d="M1 1h22v24H1z" fill="#f6a81e"/><path d="M4 6h14v16H4z" fill="#fff3c8"/><path d="M6 10h8M6 14h8M6 18h6" stroke="#a87a20"/><path d="M12 14L21 2l2 2-9 12z" fill="#c8321e"/></svg></span>
    <span class="tapp gldt"><span class="gld-b"><svg class="i14"><use href="#gld"/></svg></span></span>
    <span class="tscroll"><svg viewBox="0 0 10 6" class="tsa"><path d="M1 5l4-4 4 4" fill="none" stroke="#666" stroke-width="1.4"/></svg><svg viewBox="0 0 10 6" class="tsa"><path d="M1 1l4 4 4-4" fill="none" stroke="#666" stroke-width="1.4"/></svg></span>
    <i class="tsep t2"></i>
    <span class="lnk">链接</span>
    <span class="cpu"><span>47%</span><span>CPU使用</span></span>
    <svg class="tri person" viewBox="0 0 16 16"><circle cx="5" cy="7" r="2.5" fill="none" stroke="#fff"/><path d="M1 15c0-3 2-5 4-5s4 2 4 5" fill="none" stroke="#fff"/><circle cx="11" cy="3" r="2.5" fill="none" stroke="#fff"/><path d="M9 7c3-1 6 1 6 4" fill="none" stroke="#fff"/></svg>
    <svg class="tri caret" viewBox="0 0 12 8"><path d="M1 7l5-5 5 5" fill="none" stroke="#fff" stroke-width="1.2"/></svg>
    <svg class="tri bat" viewBox="0 0 16 14"><path d="M5 4h9v8H5zM14 6h2v4h-2M1 1v5h3V1M2.5 6v5H5" fill="none" stroke="#fff"/></svg>
    <svg class="tri wifi" viewBox="0 0 16 14"><path d="M1 13A12 12 0 0 1 13 1M5 13a8 8 0 0 1 8-8M9 13a4 4 0 0 1 4-4" fill="none" stroke="#ccc" stroke-dasharray="2 1"/></svg>
    <svg class="tri vol" viewBox="0 0 16 14"><path d="M1 5h3l4-4v12l-4-4H1zM10 4c2 2 2 4 0 6M12 2c3 3 3 7 0 10" fill="none" stroke="#fff"/></svg>
    <svg class="tri kbd" viewBox="0 0 24 16"><path d="M.5.5h23v15H.5zM3 4h18M3 7h18M3 10h18M6 13h12" fill="none" stroke="#fff" stroke-dasharray="2 1"/></svg>
    <span class="zh">中</span>
    <span class="sred">S</span>
    <span class="clock"><span>12:05</span><span>2018/9/15</span></span>
    <span class="notif"><svg viewBox="0 0 14 16" class="nic"><path d="M0 0h14v12H5l-3 3v-3H0z" fill="#fff"/><path d="M2 3h10M2 6h10M2 9h7" stroke="#333"/></svg><i class="nbg">2</i></span>
  </div>
</div>

<div class="badge"><span>76</span></div>

<div class="sogou">
  <span class="s-logo">S</span>
  <div class="s-bar">
    <span class="s-en">英</span><span class="s-pt">’,</span>
    <svg class="s-i" viewBox="0 0 16 16"><circle cx="8" cy="8" r="7" fill="none" stroke="#1478d4" stroke-width="1.4"/><circle cx="5.5" cy="6.5" r="1" fill="#1478d4"/><circle cx="10.5" cy="6.5" r="1" fill="#1478d4"/><path d="M4 10c2 3 6 3 8 0" fill="none" stroke="#1478d4" stroke-width="1.4"/></svg>
    <svg class="s-i" viewBox="0 0 16 16"><rect x="5" y="0" width="6" height="10" rx="3" fill="#1478d4"/><path d="M2 7c0 7 12 7 12 0M8 13v3" fill="none" stroke="#1478d4" stroke-width="1.4"/></svg>
    <svg class="s-i" viewBox="0 0 16 16"><rect x="0" y="2" width="16" height="12" rx="2" fill="#1478d4"/><path d="M2 5h12M2 8h12M4 11h8" stroke="#fff" stroke-dasharray="2 1"/></svg>
    <svg class="s-i" viewBox="0 0 16 16"><circle cx="7" cy="4" r="3.5" fill="#bcc6d0"/><path d="M1 13c0-4 3-6 6-6s5 1 6 3v3z" fill="#bcc6d0"/></svg>
    <svg class="s-i" viewBox="0 0 16 16"><path d="M5 1l3 1 3-1 5 3-2 3-2-1v9H4V6L2 7 0 4z" fill="#1478d4"/></svg>
    <svg class="s-i" viewBox="0 0 16 16"><path d="M15 4l-3 2-2-2 2-3c-3-1-6 1-5 5L1 12c-1 2 1 4 3 3l6-6c4 1 6-2 5-5z" fill="#1478d4"/></svg>
  </div>
</div>

<svg class="marks" viewBox="0 0 1366 768" aria-hidden="true">
  <ellipse cx="810" cy="150" rx="60" ry="34" fill="none" stroke="#f00" stroke-width="7"/>
  <ellipse cx="1122" cy="567" rx="190" ry="93" fill="none" stroke="#f00" stroke-width="7"/>
</svg>
</body>
</html>
```
FILE: styles.css
```css
*{box-sizing:border-box;margin:0;padding:0}
html,body{width:1366px;height:768px;overflow:hidden}
body{position:relative;font:12px/16px "Liberation Sans","Noto Sans CJK SC",sans-serif;color:#1a1a1a;background:#eee}
i{font-style:normal}
.defs{position:absolute;width:0;height:0}
.i{width:15px;height:16px;flex:none}
.i14{width:14px;height:14px;display:block}
.ic20{width:20px;height:16px;margin-right:3px}
.m{font-family:"Liberation Mono",monospace;font-size:10px}
.app{width:1366px;height:768px;display:flex;flex-direction:column;background:#eee}

/* title + menu */
.title{height:23px;background:#fff;display:flex;align-items:center;flex:none}
.app-ic{width:16px;height:16px;margin:0 4px 0 2px;background:#0f86e8;border-radius:3px;display:flex;align-items:center;justify-content:center}
.title-t{font-size:12.85px;white-space:nowrap}
.win{margin-left:auto;display:flex;gap:34px;margin-right:19px}
.wb{width:12px;height:12px}
.menu{height:31px;flex:none;background:#f5f5f5;display:flex;align-items:center;padding-left:6px;gap:10.3px;white-space:nowrap}
.menu .mi{margin-right:-5px}
.menu .mi2{margin-right:0}
.item{display:flex;align-items:center;gap:4px;margin-right:8px;white-space:nowrap;flex:none}
.x2{margin-left:2px}
.t10{margin-right:10px}.t7{margin-right:7px}.t6{margin-right:6px}.t5{margin-right:5px}.t4{margin-right:4px}
.ml-4{margin-left:-4px}
.notice{width:170px;flex:none;height:31px;line-height:33px;padding-left:27px;margin-left:-1px;background:#fafafa;color:#3c7a10;border-radius:3px}
.acct{display:flex;align-items:center;gap:5px;margin-left:17px;flex:none}
.bean{margin-left:1px;flex:none}
.bellic{width:17px;height:18px;margin-left:6px}
.more{font-size:14px;line-height:12px;color:#222;font-weight:700;flex:none}
.menu .more{margin-left:auto;margin-right:4px}
.dd{display:inline-block;width:0;height:0;border-style:solid;border-width:3px 3px 0;border-color:#111 transparent transparent;margin-left:4px;flex:none}
.item .dd{margin-left:2px}
.item .d1{margin-left:-1px}
.d3{margin:0 0 0 6px}.d4{margin:0 9px 0 -3px}.d8{margin:0 8px 0 3px}

/* toolbars */
.tb1{height:26px;margin-bottom:4px;display:flex;flex:none;gap:2px}
.seg{display:flex;align-items:center;height:100%;background:#f7f7f7;border-radius:3px;white-space:nowrap;flex:none}
.off{color:#a8a8a8}
.sep{display:block;width:1px;height:20px;background:#b4b4b4;margin:0 6px 0 -1px;flex:none}
.s1a{width:151px;padding-left:5px}
.s1a .sep{margin-left:7px}
.g5{margin-left:6px}.g6{margin-left:8px}
.m1{margin-left:19px}
.s1b{width:547px;padding-left:4px}
.m2{margin-left:auto;margin-right:3px}
.sigma{width:15px;text-align:center;font-family:"DejaVu Sans",sans-serif;font-weight:700;font-size:13px}
.s1c{flex:1 1 0;min-width:0;padding-left:3px}
.tb1 .item,.tb1 .view{padding-top:1px}
.view{display:flex;align-items:center;gap:4px;background:#fff;height:26px;padding-left:3px;width:50px;flex:none}
.m3{margin-left:auto;margin-right:4px}
.main{flex:1;min-height:0;display:flex}

/* left nav */
.nav{width:166px;flex:none;margin-right:4px;display:flex;flex-direction:column;height:620px}
.nav-h{height:16px;background:#0050e0;color:#fff;font-size:13px;line-height:16px;padding-left:1px;display:flex;justify-content:space-between;flex:none}
.nav-x{display:flex;gap:8px;padding-right:3px;align-items:center}
.pin{width:10px;height:12px}
.nav-b{height:22px;margin:0 0 0 1px;border:1px solid #9a9a9a;background:#f0f0f0;text-align:center;line-height:23px;font-size:12px;flex:none}
.treebox{flex:1;min-height:0;margin:1px 0 1px 3px;border:1px solid #9a9a9a;background:#fff;display:flex;flex-direction:column}
.tree-tools{height:27px;flex:none;padding:5px 0 0 4px;display:flex}
.tree-wrap{flex:1;min-height:0;display:flex}
.tree{flex:1;min-width:0;overflow:hidden;padding-top:2px}
.r{height:16px;display:flex;align-items:center;white-space:nowrap}
.t{margin-left:5px;font-size:12px}
.l1 .t{margin-left:6px}
.l1{padding-left:7px}
.l2{padding-left:31px}
.gv{background:linear-gradient(#888 50%,transparent 50%) 12px 0/1px 2px repeat-y,linear-gradient(#888 50%,transparent 50%) 31px 0/1px 2px repeat-y}
.cn{display:block;width:12px;height:1px;border-top:1px dotted #777;flex:none}
.cn1{display:block;width:4px;height:1px;border-top:1px dotted #777;flex:none;margin:0 1px}
.chev{display:block;width:7px;height:7px;border-right:2px solid #888;border-bottom:2px solid #888;flex:none}
.chev.c{transform:rotate(-45deg);margin:0 3px 0 0;opacity:.6}
.chev.o{transform:rotate(45deg) translate(-2px,-2px);margin:0 3px 0 0;border-color:#555}
.fd{width:15px;height:13px;flex:none}
.sel{display:flex;align-items:center;background:#d8d8d8;height:16px;padding-right:4px;width:55px}
.vsb{width:15px;margin-right:2px;background:#f0f0f0;display:flex;flex-direction:column;flex:none;align-items:center}
.sbarrow{width:10px;height:6px;margin-top:5px;flex:none}
.sbarrow.end{margin:auto 0 6px}
.vsb-thumb{width:100%;height:315px;background:#c8c8c8;margin-top:70px;flex:none}

/* work */
.work{flex:1;min-width:0;display:flex;flex-direction:column}
.row{display:flex;flex:none;gap:2px;padding-left:2px}
.r2{height:23px;margin-bottom:5px}
.r3{height:24px;margin-bottom:4px}
.r4{height:27px;margin-bottom:1px}
.r2 .item,.r3 .item{padding-top:3px}
.grip{display:block;width:3px;height:16px;margin:0 4px 0 3px;flex:none;background:radial-gradient(circle,#a0a0a0 1px,transparent 1.2px) 0 0/3px 4px repeat-y}
.g-s{margin:0 1px 0 3px}
.grip.long{height:180px;width:8px;margin:2px auto;background-size:4px 4px;background-repeat:repeat}
.s2{width:789px}
.s3a{width:637px}
.s3a .sep{margin-left:2px}
.s3b{width:422px}
.combo{display:flex;align-items:center;justify-content:space-between;height:24px;background:#fff;padding:2px 4px 0 3px;margin-right:3px;flex:none}
.combo .dd{margin:0}
.c57{width:57px}.c68{width:68px}.c69{width:69px}.c70{width:70px}.c58{width:58px}
.combo.blank{width:56px;height:27px;justify-content:flex-end;margin:0 6px 0 -4px}
.s4{width:1159px}
.s4end{width:31px;background:#fff;margin-left:2px;display:flex;align-items:center;height:100%}
.m4{margin-left:auto;margin-right:3px}
.btn{height:23px;border:1px solid #2f80d8;background:#cfe4f8;padding:0 3px;margin-right:4px}
.r3 .btn{padding-top:2px}
.btn.b75{width:75px;margin-right:4px}
.btn.nm{margin-right:0;border-right:0}
.canvas{width:1196px;height:305px;display:block;flex:none}
.axn text{font:13px "Liberation Sans",sans-serif;fill:#ccc}
.cad text{font:29px "Liberation Sans",sans-serif;fill:#eaeaea}
.cad .cj{font-weight:400;fill:#ddd}
.cad .ghost{fill:#999}
.cad .dim{fill:#ddd}
.axy{font:13px "Liberation Sans",sans-serif;fill:#0f0}
.axx{font:13px "Liberation Sans",sans-serif;fill:#f00}

/* snap row */
.snap{height:27px;margin:2px 0 4px}
.sn1{width:208px}
.sn2{width:262px}
.sn3{flex:1 1 0;min-width:0;padding-left:8px;background:#eee}
.sn3 .combo{height:27px;margin-right:0;padding-top:0}
.sn3 .sep{margin:0 2px 0 5px}
.lab{color:#777;margin:0 6px 0 0;font-size:12px;flex:none}
.lab.x{margin-right:4px}
.lab.e{margin-right:0}
.spin{width:57px;height:24px;border:1px solid #888;background:#f4f4f4;display:flex;align-items:center;justify-content:flex-end;color:#888;margin:0 3px 0 0;flex:none}
.spin .v{margin-right:5px}
.spb{display:flex;flex-direction:column;justify-content:space-between;width:10px;height:14px;margin-right:2px;align-items:center}
.up,.dn{display:block;width:0;height:0;border-style:solid;border-color:transparent}
.up{border-width:0 3px 3px;border-bottom-color:#555}
.dn{border-width:3px 3px 0;border-top-color:#555}
.wide{width:69px;margin-left:5px}
.wide .dd{margin:6px 7px 0 0}
.chk{display:block;width:12px;height:12px;border:1px solid #999;background:#f4f4f4;margin:0 8px 0 0;flex:none}
.rotl{flex:none}

/* grid pane */
.gridpane{display:flex;height:199px;flex:none}
.gp-strip{width:13px;flex:none;background:#eee;padding-top:3px}
.gp-x{display:block;width:10px;height:10px;margin-left:1px}
.gp-body{flex:1;min-width:0;display:flex;flex-direction:column}
.gtb{height:27px;flex:none;display:flex;align-items:center;background:linear-gradient(#fff,#f0f0f0);margin-left:-13px;padding-left:17px;padding-top:2px;position:relative}
.gtb .item{margin-right:7px;gap:5px}
.gtb .off{margin-right:9px}
.tx{margin-right:10px;white-space:nowrap}
.gtable{flex:1;min-height:0;display:flex;flex-direction:column;background:#fff;border:1px solid #a8a8a8;border-right-color:#ccc}
.grid{display:grid;grid-template-columns:32px 40px 82px 100px 71px 72px 41px 81px 81px 81px 81px 80px 128px 107px 81px 24px;grid-template-rows:19px 19px 20px;flex:none;width:1183px;overflow:hidden}
.h{background:linear-gradient(#fff,#ededed);border-right:1px solid #c8c8c8;border-bottom:1px solid #c8c8c8;display:flex;align-items:center;justify-content:center;white-space:nowrap;overflow:hidden}
.rs{grid-row:span 2}
.cs3{grid-column:span 3}
.clip{justify-content:flex-start;padding-left:3px;border-right:0}
.act{background:linear-gradient(#fadb9f,#f2c261);color:#5a1a7a}
.d{background:#a6c8ee;border-right:1px solid #bcd0e6;border-bottom:1px solid #c8c8c8;padding-left:3px;line-height:19px;white-space:nowrap;overflow:hidden}
.mono{font-family:"Liberation Mono","Noto Sans CJK SC",monospace;font-size:10px}
.rowh{background:#ffd898;text-align:center;color:#6a1a3a;padding:0}
.first{border-right:1px solid #222}
.cur{position:relative;background:#8bbbe9;border:3px solid #7f7f7f;overflow:visible;padding-left:0;line-height:14px}
.hnd{position:absolute;right:-5px;bottom:-5px;width:5px;height:5px;background:#7f7f7f;border:1px solid #fff}
.gfill{flex:1;min-height:0}
.hsb{height:15px;flex:none;background:#f0f0f0;display:flex;align-items:center;margin-bottom:1px}
.sbarrow.h1,.sbarrow.h2{width:6px;height:10px;margin:0}
.sbarrow.h1{margin-left:5px}
.hsb-thumb{width:438px;height:15px;background:#c8c8c8;margin-left:669px}
.sbarrow.h2{margin-left:49px}

/* status */
.status{height:20px;flex:none;display:flex;gap:3px;margin-top:auto;background:#eee}
.st{height:20px;border:1px solid #d8d8d8;background:#f4f4f4;line-height:18px;padding-left:2px;white-space:nowrap;overflow:hidden}
.s147{width:148px}.s77{width:77px}.s97{width:97px}.s48{width:48px}.s70{width:70px}.grow{flex:1}

/* taskbar */
.taskbar{height:40px;flex:none;background:#0a1a20;display:flex;align-items:center;color:#eee}
.start{width:48px;height:40px;background:#020405;display:flex;align-items:center;justify-content:center;flex:none}
.win10{width:16px;height:16px}
.search{width:344px;height:40px;background:#f0f0f0;display:flex;align-items:center;color:#444;padding-left:10px;flex:none}
.cortana{display:block;width:20px;height:20px;border:3px solid #222;border-radius:50%;margin-right:10px}
.stxt{font-size:14px}
.mic{width:12px;height:18px;margin-left:109px}
.tk{width:22px;height:22px;flex:none}
.tv{width:16px;height:16px;margin-left:16px}
.fan{margin-left:31px}
.ie{margin-left:30px}
.swirl{display:flex;align-items:flex-start;margin-left:26px;width:32px;flex:none}
.tkb{width:13px;height:14px;margin:-3px 0 0 -9px}
.tsep{display:block;width:3px;height:20px;border-left:1px solid #445;border-right:1px solid #445;margin-left:14px;flex:none}
.tapp{height:40px;width:42px;display:flex;align-items:center;justify-content:center;border-bottom:2px solid #76b9ed;flex:none}
.note{margin-left:17px;width:42px}
.ap{width:24px;height:26px}
.gldt{margin-left:2px;background:#26343c;width:40px}
.gld-b{width:20px;height:20px;background:#0f86e8;border-radius:4px;display:flex;align-items:center;justify-content:center}
.tscroll{width:17px;height:40px;background:#f4f4f4;margin-left:150px;display:flex;flex-direction:column;justify-content:space-between;align-items:center;padding:9px 0;flex:none}
.tsa{width:10px;height:6px}
.t2{margin-left:11px;height:22px}
.lnk{color:#bbb;margin-left:11px;flex:none}
.cpu{display:flex;flex-direction:column;align-items:center;gap:4px;margin-left:21px;width:50px;flex:none;font-size:12px;line-height:16px}
.tri{flex:none;width:16px;height:14px}
.person{margin-left:36px}
.caret{width:12px;height:8px;margin-left:16px}
.bat{margin-left:11px}
.wifi{margin-left:10px}
.vol{margin-left:6px}
.kbd{width:24px;height:16px;margin-left:7px}
.zh{margin-left:10px;font-size:14px;flex:none}
.sred{margin-left:12px;width:15px;height:18px;border-radius:3px;background:#ee4b1c;color:#fff;font:700 14px/18px "Liberation Sans",sans-serif;text-align:center;transform:rotate(-8deg);flex:none}
.clock{display:flex;flex-direction:column;align-items:center;margin-left:18px;width:60px;gap:4px;font-size:12px;flex:none}
.notif{position:relative;margin-left:24px;width:16px;height:18px;display:block;flex:none}
.nic{display:block;width:14px;height:16px}
.nbg{position:absolute;left:5px;top:8px;width:16px;height:16px;border-radius:50%;background:#444;border:1px solid #999;color:#fff;font:700 11px/14px "Liberation Sans",sans-serif;text-align:center}

/* overlays */
.badge{position:absolute;left:463px;top:-24px;width:43px;height:43px;border-radius:50%;background:#4cae4c;border:2px solid #eee;box-shadow:0 1px 3px #666;display:flex;align-items:flex-end;justify-content:center;color:#fff;font-size:11px;line-height:17px}
.sogou{position:absolute;left:976px;top:17px;width:208px;height:36px}
.s-logo{position:absolute;left:0;top:0;width:28px;height:33px;background:#f3591f;border-radius:6px;color:#fff;font:700 28px/33px "Liberation Sans",sans-serif;text-align:center;transform:rotate(-6deg);z-index:1}
.s-bar{position:absolute;left:24px;top:4px;width:184px;height:31px;background:rgba(248,251,253,.92);border:1px solid #c8d4e0;display:flex;align-items:center;padding-left:10px;gap:7px}
.s-en{font-weight:700;font-size:15px;color:#1478d4;margin-right:4px}
.s-pt{font-weight:700;font-size:14px;color:#1478d4;margin-right:2px}
.s-i{width:15px;height:16px;flex:none}
.marks{position:absolute;left:0;top:0;width:1366px;height:768px;pointer-events:none}
```
